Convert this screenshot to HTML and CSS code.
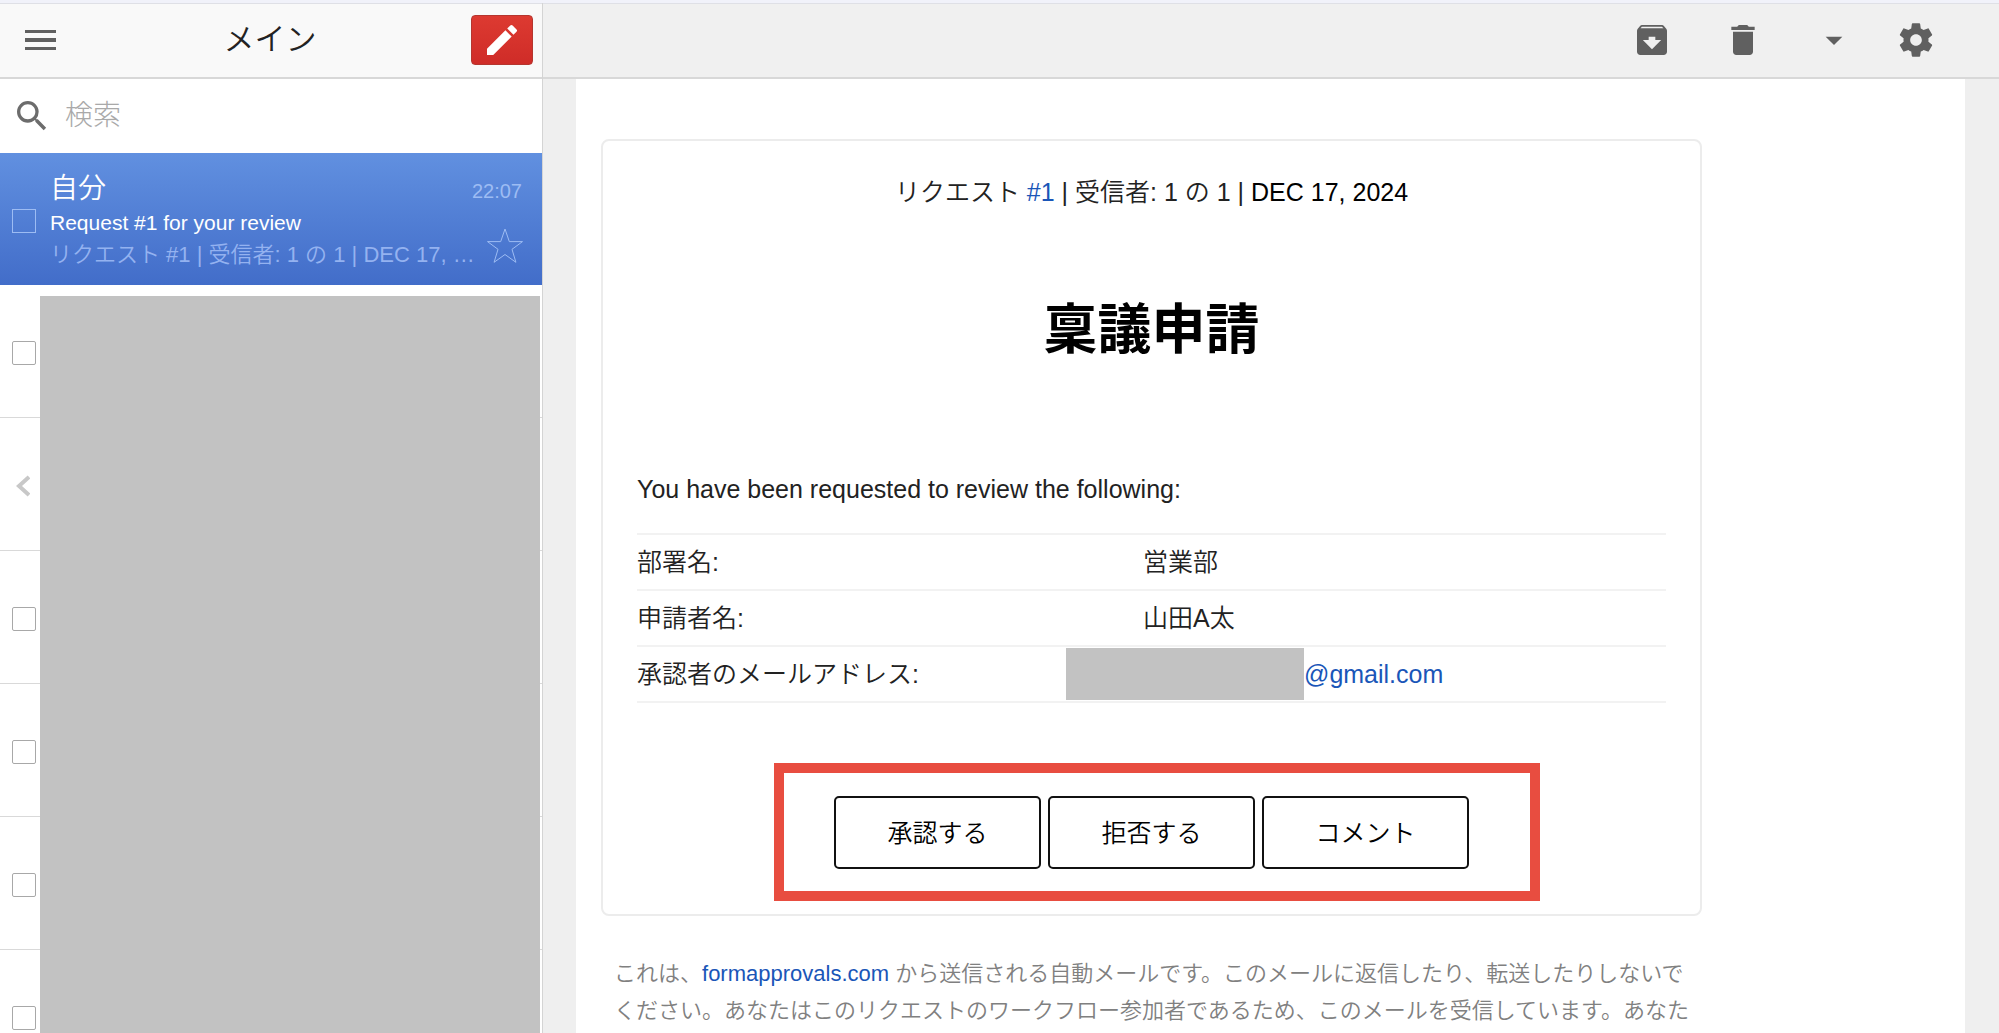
FILE: index.html
```html
<!DOCTYPE html>
<html lang="ja">
<head>
<meta charset="utf-8">
<meta name="viewport" content="width=device-width, initial-scale=1">
<title>メイン</title>
<link rel="stylesheet" href="styles.css">
</head>
<body>
<div class="app">
  <aside class="sidebar">
    <header class="bar bar-list">
      <button class="icon-button menu" aria-label="メニュー"><svg viewBox="0 0 32 20"><path d="M0 0h31v3H0zM0 8h31v4H0zM0 17h31v3H0z"/></svg></button>
      <h1 class="bar-title">メイン</h1>
      <button class="icon-button compose" aria-label="作成"><svg viewBox="0 0 24 24"><path d="M3 17.25V21h3.75L17.81 9.94l-3.75-3.75L3 17.25zM20.71 7.04a1 1 0 0 0 0-1.41l-2.34-2.34a1 1 0 0 0-1.41 0l-1.83 1.83 3.75 3.75 1.83-1.83z"/></svg></button>
    </header>
    <label class="search">
      <svg class="search-icon" viewBox="0 0 24 24"><path d="M15.5 14h-.79l-.28-.27A6.47 6.47 0 0 0 16 9.5 6.5 6.5 0 1 0 9.5 16c1.61 0 3.09-.59 4.23-1.57l.27.28v.79l5 4.99L20.49 19l-4.99-5zm-6 0C7.01 14 5 11.99 5 9.5S7.01 5 9.5 5 14 7.01 14 9.5 11.99 14 9.5 14z"/></svg>
      <input class="search-field" type="search" placeholder="検索" aria-label="検索">
    </label>
    <article class="thread">
      <input class="check check-selected" type="checkbox" aria-label="自分のスレッドを選択">
      <div class="thread-text">
        <div class="thread-top"><span class="sender">自分</span><time class="time">22:07</time></div>
        <div class="subject">Request #1 for your review</div>
        <div class="snippet">リクエスト #1 | 受信者: 1 の 1 | DEC 17, …</div>
      </div>
      <button class="icon-button star" aria-label="スター"><svg viewBox="0 0 38 36"><path d="M19 1l4.300 12.600h13.200L26 21.300l3.900 13L19 26.500 8.100 34.300l3.900-13L1.500 13.600h13.200z"/></svg></button>
    </article>
    <div class="list">
      <div class="row"><input class="check" type="checkbox" aria-label="スレッド 2"></div>
      <div class="row"><button class="icon-button back" aria-label="戻る"><svg viewBox="0 0 14 22"><path d="M13 2L3 11l10 9"/></svg></button></div>
      <div class="row"><input class="check" type="checkbox" aria-label="スレッド 4"></div>
      <div class="row"><input class="check" type="checkbox" aria-label="スレッド 5"></div>
      <div class="row"><input class="check" type="checkbox" aria-label="スレッド 6"></div>
      <div class="row"><input class="check" type="checkbox" aria-label="スレッド 7"></div>
      <div class="list-mask"></div>
    </div>
  </aside>
  <main class="reader">
    <header class="bar bar-reader">
      <div class="tools">
        <button class="icon-button tool" aria-label="アーカイブ"><svg viewBox="0 0 24 24"><path d="M20.540 5.230l-1.390-1.680C18.880 3.210 18.470 3 18 3H6c-.47 0-.88.21-1.160.55L3.460 5.230C3.170 5.570 3 6.020 3 6.500V19c0 1.100.9 2 2 2h14c1.100 0 2-.9 2-2V6.500c0-.48-.17-.93-.46-1.270zM12 17.500L6.500 12H10v-2h4v2h3.500L12 17.500zM5.120 5l.81-1h12l.94 1H5.120z"/></svg></button>
        <button class="icon-button tool" aria-label="削除"><svg viewBox="0 0 24 24"><path d="M6 19c0 1.100.9 2 2 2h8c1.100 0 2-.9 2-2V7H6v12zM19 4h-3.500l-1-1h-5l-1 1H5v2h14V4z"/></svg></button>
        <button class="icon-button tool" aria-label="その他"><svg viewBox="0 0 24 24"><path d="M7 10l5 5 5-5z"/></svg></button>
      </div>
      <button class="icon-button tool" aria-label="設定"><svg viewBox="0 0 24 24"><path d="M19.430 12.980c.04-.32.07-.64.07-.98s-.03-.66-.07-.98l2.110-1.650c.19-.15.24-.42.12-.64l-2-3.460c-.12-.22-.39-.3-.61-.22l-2.490 1c-.52-.4-1.080-.73-1.690-.98l-.38-2.650C14.460 2.180 14.250 2 14 2h-4c-.25 0-.46.18-.49.42l-.38 2.650c-.61.25-1.170.59-1.690.98l-2.490-1c-.23-.09-.49 0-.61.22l-2 3.460c-.13.22-.07.49.12.64l2.110 1.650c-.04.32-.07.65-.07.98s.03.66.07.98l-2.110 1.650c-.19.15-.24.42-.12.64l2 3.460c.12.22.39.3.61.22l2.490-1c.52.4 1.080.73 1.690.98l.38 2.650c.03.24.24.42.49.42h4c.25 0 .46-.18.49-.42l.38-2.650c.61-.25 1.170-.59 1.690-.98l2.490 1c.23.09.49 0 .61-.22l2-3.460c.12-.22.07-.49-.12-.64l-2.110-1.650zM12 15.500c-1.930 0-3.500-1.570-3.500-3.500s1.570-3.500 3.500-3.500 3.500 1.570 3.500 3.500-1.570 3.500-3.500 3.500z"/></svg></button>
    </header>
    <div class="page">
      <section class="card">
        <p class="meta">リクエスト <a href="#request">#1</a> | 受信者: 1 の 1 | <span class="date">DEC 17, 2024</span></p>
        <h2 class="title">稟議申請</h2>
        <p class="lead">You have been requested to review the following:</p>
        <table class="fields">
          <tr><th scope="row">部署名:</th><td>営業部</td></tr>
          <tr><th scope="row">申請者名:</th><td>山田A太</td></tr>
          <tr><th scope="row">承認者のメールアドレス:</th><td><div class="email"><span class="email-mask"></span><a href="#mail">@gmail.com</a></div></td></tr>
        </table>
        <div class="actions">
          <button class="action">承認する</button>
          <button class="action">拒否する</button>
          <button class="action">コメント</button>
        </div>
      </section>
      <p class="note">これは、<a href="#site">formapprovals.com</a> から送信される自動メールです。このメールに返信したり、転送したりしないでください。あなたはこのリクエストのワークフロー参加者であるため、このメールを受信しています。あなた</p>
    </div>
  </main>
</div>
</body>
</html>
```

FILE: styles.css
```css
* { box-sizing: border-box; }
body {
  margin: 0;
  font-family: "Liberation Sans", "Noto Sans CJK JP", sans-serif;
  font-size: 25px;
  font-weight: 350;
  color: #222;
}
h1, h2, p { margin: 0; }
a { color: #1a56b8; text-decoration: none; }

.app {
  display: flex;
  height: 100vh;
  overflow: hidden;
  border-top: 3px solid #f1f2fa;
  background: #efefef;
}
.sidebar {
  display: flex;
  flex-direction: column;
  flex: none;
  width: 543px;
  border-right: 1px solid #d4d4d4;
  background: #fff;
}
.bar {
  display: flex;
  align-items: center;
  flex: none;
  height: 76px;
  padding-bottom: 2px;
  border-top: 1px solid #dfe0e6;
  border-bottom: 2px solid #d8d8d8;
}
.bar-list {
  justify-content: space-between;
  padding-right: 9px;
  padding-left: 25px;
  background: #f9f9f9;
}
.bar-title {
  padding-left: 12px;
  font-size: 31px;
  font-weight: 350;
  line-height: 40px;
}
.icon-button {
  display: block;
  flex: none;
  padding: 0;
  border: 0;
  background: none;
  fill: #606060;
}
.icon-button svg { display: block; }
.menu svg { width: 32px; height: 20px; }
.compose {
  padding: 4px 10px;
  border: 1px solid #b5362f;
  border-radius: 4px;
  background: linear-gradient(#dd3a31, #cf2c28);
  fill: #fff;
}
.compose svg { width: 40px; height: 40px; }

.search {
  display: flex;
  align-items: center;
  gap: 13px;
  flex: none;
  height: 74px;
  padding-left: 12px;
}
.search-icon { flex: none; width: 40px; height: 40px; fill: #6c6c6c; }
.search-field {
  flex: 1;
  min-width: 0;
  padding: 0;
  border: 0;
  outline: 0;
  background: none;
  font: 300 28px/40px "Liberation Sans", "Noto Sans CJK JP", sans-serif;
}
.search-field::placeholder { color: #a9a9a9; }

.check {
  appearance: none;
  flex: none;
  width: 24px;
  height: 24px;
  margin: 0;
  border: 1px solid #a8a8a8;
  border-radius: 2px;
  background: #fff;
}
.check-selected {
  border-color: #9dbcf3;
  border-radius: 0;
  background: none;
}
.thread {
  display: flex;
  align-items: center;
  flex: none;
  position: relative;
  height: 132px;
  padding: 4px 20px 0 12px;
  background: linear-gradient(#6190e0, #426dc9);
  color: #fff;
}
.thread-text { flex: 1; min-width: 0; padding-left: 14px; }
.thread-top {
  display: flex;
  align-items: flex-end;
  justify-content: space-between;
  line-height: 36px;
}
.sender { font-size: 28px; }
.time { color: #9dbcf3; font-size: 20px; line-height: 32px; }
.subject { font-size: 21px; line-height: 32px; }
.snippet {
  color: #94b2f0;
  font-size: 22px;
  line-height: 32px;
  white-space: nowrap;
}
.star { position: absolute; right: 18px; bottom: 21px; }
.star svg {
  width: 38px;
  height: 36px;
  fill: none;
  stroke: #9dbcf3;
}

.list { position: relative; flex: 1; min-height: 0; overflow: hidden; }
.row {
  display: flex;
  align-items: center;
  height: 133px;
  padding: 4px 0 0 12px;
  border-bottom: 1px solid #d9d9d9;
}
.back { padding: 0 4px; }
.back svg {
  width: 14px;
  height: 22px;
  fill: none;
  stroke: #c8c8c8;
  stroke-width: 4;
}
.list-mask {
  position: absolute;
  inset: 11px 2px 0 40px;
  background: #c2c2c2;
}

.reader {
  display: flex;
  flex-direction: column;
  flex: 1;
  min-width: 0;
}
.bar-reader {
  justify-content: flex-end;
  gap: 42px;
  padding-right: 63px;
  background: #f0f0f0;
}
.tools { display: flex; gap: 51px; }
.tool svg { width: 40px; height: 40px; }

.page {
  flex: 1;
  min-height: 0;
  overflow: hidden;
  margin: 0 34px 0 33px;
  padding: 60px 25px 0;
  background: #fff;
}
.card {
  max-width: 1101px;
  padding: 31px 34px 45px;
  border: 2px solid #ececec;
  border-radius: 8px;
}
.meta { line-height: 40px; text-align: center; }
.date { color: #000; }
.title {
  margin-top: 78px;
  color: #000;
  font-size: 54px;
  line-height: 80px;
  text-align: center;
}
.lead { margin-top: 99px; line-height: 40px; }
.fields {
  width: 100%;
  margin-top: 24px;
  border-collapse: collapse;
  table-layout: fixed;
}
.fields tr { border: solid #f2f2f2; border-width: 2px 0; }
.fields th, .fields td {
  height: 56px;
  padding: 0;
  font-weight: 350;
  line-height: 40px;
  text-align: left;
}
.fields th { width: 506px; }
.email { display: flex; align-items: center; }
.email-mask {
  width: 238px;
  height: 52px;
  margin-left: -77px;
  background: #c2c2c2;
}

/* The frame around the buttons is drawn over the card. */
.actions {
  position: relative;
  display: flex;
  gap: 7px;
  width: fit-content;
  margin: 93px auto 0;
}
.actions::after {
  content: "";
  position: absolute;
  inset: -33px -71px -32px -60px;
  border: 10px solid #e84d40;
  pointer-events: none;
}
.action {
  width: 207px;
  height: 73px;
  padding: 0;
  border: 2px solid #111;
  border-radius: 5px;
  background: #fff;
  color: #000;
  font: 350 25px/40px "Liberation Sans", "Noto Sans CJK JP", sans-serif;
}
.note {
  max-width: 1101px;
  margin-top: 39px;
  padding: 0 13px;
  color: #808080;
  font-size: 22px;
  line-height: 37px;
}
```
